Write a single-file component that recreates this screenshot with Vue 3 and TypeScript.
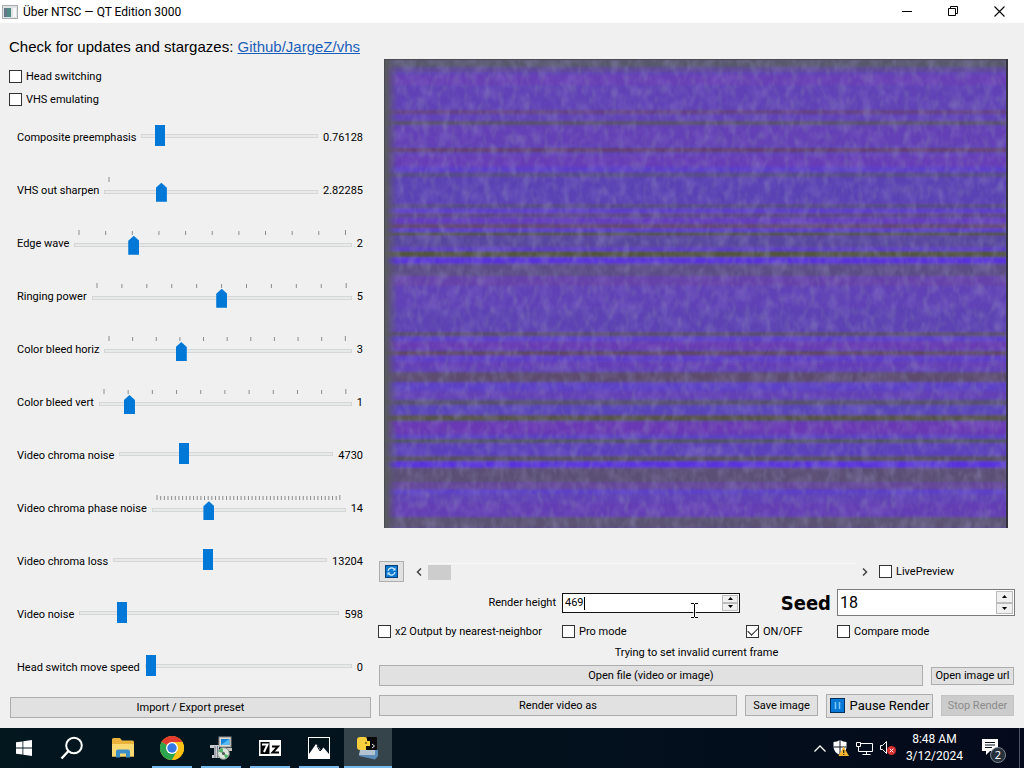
<script setup lang="ts">
import { ref } from 'vue'

interface Slider {
  id: string
  label: string
  value: string
  position: number
  ticks: number[]
}

const evenTicks = (count: number): number[] =>
  Array.from({ length: count + 1 }, (_, i) => (i * 100) / count)

const sliders = ref<Slider[]>([
  { id: 'preemphasis', label: 'Composite preemphasis', value: '0.76128', position: 76, ticks: [] },
  { id: 'sharpen', label: 'VHS out sharpen', value: '2.82285', position: 252, ticks: [0] },
  { id: 'edge-wave', label: 'Edge wave', value: '2', position: 200, ticks: evenTicks(10) },
  { id: 'ringing', label: 'Ringing power', value: '5', position: 500, ticks: evenTicks(10) },
  { id: 'bleed-h', label: 'Color bleed horiz', value: '3', position: 300, ticks: evenTicks(10) },
  { id: 'bleed-v', label: 'Color bleed vert', value: '1', position: 100, ticks: evenTicks(10) },
  { id: 'chroma-noise', label: 'Video chroma noise', value: '4730', position: 289, ticks: [] },
  { id: 'phase-noise', label: 'Video chroma phase noise', value: '14', position: 280, ticks: evenTicks(50) },
  { id: 'chroma-loss', label: 'Video chroma loss', value: '13204', position: 438, ticks: [] },
  { id: 'noise', label: 'Video noise', value: '598', position: 146, ticks: [] },
  { id: 'head-speed', label: 'Head switch move speed', value: '0', position: 0, ticks: [] },
])

const renderHeight = ref(469)
const seed = ref(18)
const framePosition = ref(0)

interface Band { y: number; h: number; c: string; o: number }
const bands: Band[] = [
  { y: 0, h: 8, c: '#59586c', o: 1 },
  { y: 8, h: 5, c: '#5c4c90', o: 0.8 },
  { y: 16, h: 10, c: '#6d3eb6', o: 0.6 },
  { y: 51, h: 4, c: '#654280', o: 0.9 },
  { y: 62, h: 4, c: '#5a516c', o: 1 },
  { y: 68, h: 18, c: '#673db4', o: 0.5 },
  { y: 89, h: 4, c: '#623f6c', o: 1 },
  { y: 96, h: 14, c: '#6a3cb8', o: 0.6 },
  { y: 108, h: 4, c: '#573fd2', o: 0.7 },
  { y: 114, h: 4, c: '#554b86', o: 1 },
  { y: 119, h: 24, c: '#5643b2', o: 0.6 },
  { y: 145, h: 4, c: '#554c80', o: 0.9 },
  { y: 150, h: 3, c: '#5b3bd2', o: 0.8 },
  { y: 155, h: 3, c: '#5b4978', o: 1 },
  { y: 160, h: 3, c: '#6638c2', o: 0.8 },
  { y: 165, h: 4, c: '#63456f', o: 1 },
  { y: 170, h: 3, c: '#5a3cd0', o: 0.9 },
  { y: 173, h: 4, c: '#54524f', o: 1 },
  { y: 178, h: 10, c: '#56489a', o: 0.8 },
  { y: 189, h: 3, c: '#5b39d0', o: 0.8 },
  { y: 192, h: 6, c: '#53543e', o: 1 },
  { y: 199, h: 5, c: '#5933dc', o: 1 },
  { y: 205, h: 12, c: '#5d5082', o: 0.9 },
  { y: 217, h: 10, c: '#6742a8', o: 0.8 },
  { y: 250, h: 22, c: '#5844b0', o: 0.6 },
  { y: 273, h: 4, c: '#5a506c', o: 1 },
  { y: 278, h: 4, c: '#5d3fd0', o: 0.8 },
  { y: 283, h: 7, c: '#6b38b2', o: 0.7 },
  { y: 292, h: 4, c: '#5e475f', o: 1 },
  { y: 298, h: 4, c: '#5c3dcf', o: 0.8 },
  { y: 303, h: 6, c: '#663bb8', o: 0.7 },
  { y: 313, h: 10, c: '#5b4c6e', o: 1 },
  { y: 324, h: 8, c: '#5a42cc', o: 0.7 },
  { y: 333, h: 5, c: '#6640b7', o: 0.7 },
  { y: 341, h: 5, c: '#575170', o: 1 },
  { y: 347, h: 8, c: '#5846ba', o: 0.8 },
  { y: 356, h: 6, c: '#545348', o: 1 },
  { y: 363, h: 12, c: '#6a38b4', o: 0.9 },
  { y: 376, h: 3, c: '#5b40cc', o: 0.7 },
  { y: 380, h: 4, c: '#505365', o: 1 },
  { y: 386, h: 10, c: '#5842bd', o: 0.7 },
  { y: 397, h: 5, c: '#575064', o: 1 },
  { y: 403, h: 5, c: '#5930e0', o: 1 },
  { y: 409, h: 14, c: '#5b5074', o: 1 },
  { y: 423, h: 7, c: '#674994', o: 0.8 },
  { y: 431, h: 4, c: '#5a40cd', o: 0.8 },
  { y: 444, h: 14, c: '#673bb4', o: 0.7 },
  { y: 458, h: 11, c: '#5a536e', o: 0.95 },
]
</script>

<template>
  <div class="desktop">
    <header class="titlebar">
      <svg class="app-icon" width="16" height="14" viewBox="0 0 16 14" aria-hidden="true">
        <rect x=".5" y=".5" width="15" height="13" fill="#dfe3e3" stroke="#a9adad" />
        <rect x="2" y="3" width="7" height="9" fill="#4f8a86" />
        <rect x="2" y="3" width="3" height="9" fill="#64788a" />
        <rect x="11" y="3" width="3" height="9" fill="#f7f7f7" />
      </svg>
      <h1>Über NTSC — QT Edition 3000</h1>
      <div class="window-buttons">
        <button type="button" aria-label="Minimize">
          <svg width="11" height="11" viewBox="0 0 11 11"><path d="M0 5.500h10" stroke="#000" /></svg>
        </button>
        <button type="button" aria-label="Restore">
          <svg width="11" height="11" viewBox="0 0 11 11" fill="none" stroke="#000">
            <path d="M.5 2.500h7v7h-7zM2.500 2.500v-2h7v7h-2" />
          </svg>
        </button>
        <button type="button" aria-label="Close">
          <svg width="11" height="11" viewBox="0 0 11 11"><path d="M.5 .5l10 10M10.500 .5l-10 10" stroke="#000" stroke-width="1.100" /></svg>
        </button>
      </div>
    </header>

    <main>
      <section class="settings">
        <p class="updates">Check for updates and stargazes: <a href="#">Github/JargeZ/vhs</a></p>
        <label class="check"><input type="checkbox" />Head switching</label>
        <label class="check"><input type="checkbox" />VHS emulating</label>

        <div class="sliders">
          <div v-for="s in sliders" :key="s.id" class="slider-row">
            <label :for="s.id">{{ s.label }}</label>
            <div class="slider" :class="{ ticked: s.ticks.length }">
              <svg v-if="s.ticks.length" class="ticks" height="6" aria-hidden="true">
                <line
                  v-for="(t, i) in s.ticks"
                  :key="i"
                  :x1="t + '%'"
                  :x2="t + '%'"
                  :y1="i === 0 || i === s.ticks.length - 1 ? 0 : 1"
                  y2="5"
                />
              </svg>
              <input :id="s.id" v-model="s.position" type="range" min="0" max="1000" />
            </div>
            <output :for="s.id">{{ s.value }}</output>
          </div>
        </div>

        <button type="button" class="push">Import / Export preset</button>
      </section>

      <section class="workspace">
        <svg class="preview" viewBox="0 0 624 469" preserveAspectRatio="none" role="img" aria-label="Video preview">
          <defs>
            <filter id="grain" x="0" y="0" width="100%" height="100%">
              <feTurbulence type="fractalNoise" baseFrequency="0.15 0.08" numOctaves="2" seed="18" />
              <feColorMatrix values="0 0 0 0 0.22  0 0 0 0 0.22  0 0 0 0 0.40  3 0 0 0 -1.35" />
            </filter>
            <filter id="tint" x="0" y="0" width="100%" height="100%">
              <feTurbulence type="fractalNoise" baseFrequency="0.09 0.07" numOctaves="2" seed="7" />
              <feColorMatrix values="0 0 0 0 0.38  0 0 0 0 0.34  0 0 0 0 0.66  0 2.6 0 0 -1.1" />
            </filter>
            <filter id="soft" x="0" y="0" width="100%" height="100%">
              <feGaussianBlur stdDeviation="0 0.8" />
            </filter>
            <linearGradient id="edge">
              <stop offset="0" stop-color="#555a55" />
              <stop offset=".3" stop-color="#59595f" stop-opacity=".8" />
              <stop offset="1" stop-color="#574c80" stop-opacity="0" />
            </linearGradient>
          </defs>
          <rect width="624" height="469" fill="#6042b6" />
          <g filter="url(#soft)">
            <rect width="624" height="469" fill="#6042b6" />
            <rect v-for="b in bands" :key="b.y" x="0" :y="b.y" width="624" :height="b.h" :fill="b.c" :opacity="b.o" />
          </g>
          <rect width="624" height="469" filter="url(#grain)" opacity=".28" />
          <rect width="624" height="469" filter="url(#tint)" opacity=".2" />
          <rect width="14" height="469" fill="url(#edge)" />
          <path d="M.5 0v469M0 .5h624" stroke="#4a4a52" />
          <path d="M623 0v469" stroke="#34323e" stroke-width="2" />
        </svg>

        <div class="seek-row">
          <button type="button" class="push refresh" aria-label="Refresh frame">
            <svg width="13" height="13" viewBox="0 0 13 13">
              <rect x=".5" y=".5" width="12" height="12" fill="#0878d0" stroke="#073f78" />
              <path d="M3 6a3.500 3.500 0 0 1 6-2M10 7a3.500 3.500 0 0 1-6 2" fill="none" stroke="#d7efff" stroke-width="1.200" />
              <path d="M10.500 2.500v3h-3zM2.500 10.500v-3h3z" fill="#d7efff" />
            </svg>
          </button>
          <div class="scrollbar">
            <svg width="6" height="8" viewBox="0 0 6 8" aria-hidden="true"><path d="M5 .5L1.500 4 5 7.500" /></svg>
            <input v-model="framePosition" type="range" min="0" max="100" aria-label="Frame" />
            <svg width="6" height="8" viewBox="0 0 6 8" aria-hidden="true"><path d="M1 .5L4.500 4 1 7.500" /></svg>
          </div>
          <label class="check"><input type="checkbox" />LivePreview</label>
        </div>

        <div class="options">
          <label class="field-label" for="render-height">Render height</label>
          <div class="spin focused">
            <input id="render-height" v-model="renderHeight" type="number" />
            <span class="caret"></span>
            <div class="steps">
              <button type="button" aria-label="Increase render height"><svg width="5" height="3" viewBox="0 0 5 3"><path d="M0 3L2.500 0 5 3z" /></svg></button>
              <button type="button" aria-label="Decrease render height"><svg width="5" height="3" viewBox="0 0 5 3"><path d="M0 0L2.500 3 5 0z" /></svg></button>
            </div>
            <svg class="pointer" width="9" height="17" viewBox="0 0 9 17" aria-hidden="true">
              <path d="M1 1.500h3M5 1.500h3M4.500 2v13M1 15.500h3M5 15.500h3" fill="none" stroke="#fff" stroke-width="3" opacity=".7" />
              <path d="M1 1.500h3M5 1.500h3M4.500 2v13M1 15.500h3M5 15.500h3" fill="none" stroke="#000" />
            </svg>
          </div>
          <label class="field-label seed-label" for="seed">Seed</label>
          <div class="spin large">
            <input id="seed" v-model="seed" type="number" />
            <div class="steps">
              <button type="button" aria-label="Increase seed"><svg width="5" height="3" viewBox="0 0 5 3"><path d="M0 3L2.500 0 5 3z" /></svg></button>
              <button type="button" aria-label="Decrease seed"><svg width="5" height="3" viewBox="0 0 5 3"><path d="M0 0L2.500 3 5 0z" /></svg></button>
            </div>
          </div>
          <label class="check"><input type="checkbox" />x2 Output by nearest-neighbor</label>
          <label class="check"><input type="checkbox" />Pro mode</label>
          <label class="check"><input type="checkbox" checked />ON/OFF</label>
          <label class="check"><input type="checkbox" />Compare mode</label>
        </div>

        <p class="status">Trying to set invalid current frame</p>

        <div class="actions">
          <button type="button" class="push grow">Open file (video or image)</button>
          <button type="button" class="push small">Open image url</button>
        </div>
        <div class="actions last">
          <button type="button" class="push grow">Render video as</button>
          <button type="button" class="push save">Save image</button>
          <button type="button" class="push pause">
            <svg width="15" height="15" viewBox="0 0 15 15" aria-hidden="true">
              <rect x=".5" y=".5" width="14" height="14" fill="#0878d7" stroke="#052f58" />
              <path d="M5.500 4v7M9.500 4v7" stroke="#7cc7f5" stroke-width="1.500" />
            </svg>
            Pause Render
          </button>
          <button type="button" class="push stop" disabled>Stop Render</button>
        </div>
      </section>
    </main>

    <footer class="taskbar">
      <nav class="apps" aria-label="Taskbar">
        <button type="button" aria-label="Start">
          <svg width="16" height="16" viewBox="0 0 16 16" fill="#fff"><path d="M0 2.300L6.500 1.400v6.200H0zM7.300 1.300L16 0v7.600H7.300zM0 8.400h6.500v6.200L0 13.700zM7.300 8.400H16V16l-8.700-1.300z" /></svg>
        </button>
        <button type="button" aria-label="Search">
          <svg width="24" height="24" viewBox="0 0 24 24" fill="none" stroke="#fff" stroke-width="2"><circle cx="14" cy="9.500" r="7.800" /><path d="M8.500 15L1.500 22.500" stroke-width="2.400" /></svg>
        </button>
        <button type="button" class="spaced" aria-label="File Explorer">
          <svg width="22" height="20" viewBox="0 0 22 20">
            <path d="M0 1.500Q0 0 1.500 0H8l2 2.500h10.500Q22 2.500 22 4v14.500H0z" fill="#e9b33c" />
            <path d="M0 6h22v12.500H0z" fill="#fad872" />
            <path d="M4 19.500v-6Q4 11.500 6 11.500h10q2 0 2 2v6h-4V15.500H8v4z" fill="#3a8fc8" />
          </svg>
        </button>
        <button type="button" class="open" aria-label="Chrome">
          <svg width="24" height="24" viewBox="0 0 24 24">
            <circle cx="12" cy="12" r="12" fill="#fbc116" />
            <path d="M12 12L1.600 6A12 12 0 0 1 22.400 6z" fill="#e33b2e" />
            <path d="M12 12L1.600 6A12 12 0 0 0 12 24L17 15z" fill="#2da44e" />
            <path d="M12 6h10.400A12 12 0 0 1 12 24l5.200-9z" fill="#fbc116" />
            <circle cx="12" cy="12" r="6" fill="#fff" /><circle cx="12" cy="12" r="4.700" fill="#3478e5" />
          </svg>
        </button>
        <button type="button" class="open" aria-label="Installer">
          <svg width="24" height="24" viewBox="0 0 24 24">
            <rect x="10" y="1" width="12" height="10" fill="#dcdad0" stroke="#8d8d8d" />
            <rect x="12" y="3" width="8.500" height="6" fill="#1687d8" /><path d="M12 9l8-6v6z" fill="#57baf3" />
            <path d="M12 12h11v3H12z" fill="#c8c6bc" />
            <path d="M1 9h9v13H3v-3h2V12H1z" fill="#c9ccd0" /><path d="M6 10v12M8.500 10v12" stroke="#777f88" />
            <circle cx="14.500" cy="17.500" r="5.800" fill="#dce6dc" stroke="#8b958d" />
            <path d="M14.500 17.500l-5-2a5.500 5.500 0 0 1 4-3.500zM14.500 17.500l5 2a5.500 5.500 0 0 1-3 3z" fill="#52b36a" />
            <circle cx="14.500" cy="17.500" r="1.500" fill="#555" />
          </svg>
        </button>
        <button type="button" class="open" aria-label="7-Zip">
          <svg width="22" height="16" viewBox="0 0 22 16">
            <rect width="22" height="16" fill="#fff" /><path d="M1.500 2h9v12h-9z" fill="#000" />
            <path d="M3 4.500h5.500L5 12" fill="none" stroke="#fff" stroke-width="2" />
            <path d="M13 6.500h6l-5.500 6H20" fill="none" stroke="#000" stroke-width="2" />
          </svg>
        </button>
        <button type="button" class="open" aria-label="Photos">
          <svg width="22" height="22" viewBox="0 0 22 22">
            <rect x=".5" y=".5" width="21" height="21" fill="#03131c" stroke="#fff" />
            <path d="M1 17l7-10 5 6.500 2.500-3L21 17v4H1z" fill="#fff" /><path d="M9 9l3 5 2-2" fill="none" stroke="#03131c" />
          </svg>
        </button>
        <button type="button" class="open active" aria-label="Python">
          <svg width="24" height="24" viewBox="0 0 24 24">
            <path d="M5 14h17v6l-3 3.500L3 20z" fill="#5c8db8" /><path d="M4 14h15v5H3z" fill="#b4c3d0" />
            <rect x="9" y="1" width="12" height="13" rx="1" fill="#0a0a0a" /><path d="M16 8l2.500 2-2.500 2" fill="none" stroke="#eee" />
            <path d="M1 4q0-3 3-3h5q2 0 2 2v2h3v5h-4v4H4q-3 0-3-3z" fill="#f6ce3d" /><circle cx="10" cy="7" r="1" fill="#6b5310" />
          </svg>
        </button>
      </nav>
      <div class="tray">
        <svg width="12" height="7" viewBox="0 0 12 7" fill="none" stroke="#fff" stroke-width="1.300"><path d="M.5 6.500L6 1l5.500 5.500" /></svg>
        <svg width="16" height="16" viewBox="0 0 16 16">
          <path d="M7 0q3 2 6.500 2v5q0 5-6.500 8Q.5 12 .5 7V2Q4 2 7 0z" fill="#fff" /><path d="M7 0v15M.5 7h13" stroke="#07131f" />
          <path d="M10.500 6.500L16 16H5.500z" fill="#f5b52c" /><path d="M10.700 10v3M10.700 14v1" stroke="#222" stroke-width="1.200" />
        </svg>
        <svg width="17" height="14" viewBox="0 0 17 14" fill="none" stroke="#fff">
          <path d="M5 2.500h11.500v8H5M.5 1.500h4v4h-4zM2.500 5.500v5h2.500M10.500 10.500v3M6.500 13.500h8" />
        </svg>
        <svg width="16" height="14" viewBox="0 0 16 14" fill="none">
          <path d="M.5 4.500h2l4-4v12l-4-4h-2z" stroke="#fff" /><circle cx="11.500" cy="9.500" r="4.500" fill="#d62f2f" /><path d="M9.700 7.700l3.600 3.600M13.300 7.700l-3.600 3.600" stroke="#fff" />
        </svg>
        <time class="clock" datetime="2024-03-12T08:48"><span>8:48 AM</span><span>3/12/2024</span></time>
        <button type="button" class="notifications" aria-label="2 notifications">
          <svg width="17" height="16" viewBox="0 0 17 16"><path d="M0 0h16v12H8l-4 4v-4H0z" fill="#fff" /><path d="M3 3.500h10M3 6h10M3 8.500h7" stroke="#07101d" /></svg>
          <span class="badge">2</span>
        </button>
        <span class="show-desktop"></span>
      </div>
    </footer>
  </div>
</template>

<style>
html, body { margin: 0; background: #f0f0f0; }
</style>

<style scoped>
* { box-sizing: border-box; }
.desktop {
  min-height: 100vh;
  display: flex;
  flex-direction: column;
  background: #f0f0f0;
  color: #000;
  font: 11px/14px Roboto, "DejaVu Sans Condensed", sans-serif;
}
button, input { font: inherit; color: inherit; margin: 0; padding: 0; }
svg { display: block; flex: none; }
.titlebar { display: flex; align-items: center; height: 23px; padding-left: 2px; background: #fff; }
.titlebar h1 { flex: 1; margin: 0 0 0 5px; font: 400 12px/22px Roboto, sans-serif; }
.window-buttons { display: flex; }
.window-buttons button { width: 46px; height: 21px; display: grid; place-items: center; border: 0; background: none; }
.window-buttons button:last-child { margin-right: 2px; }

main { flex: 1; display: grid; grid-template-columns: minmax(0, 361fr) minmax(0, 635fr); gap: 8px; padding: 0 10px; }
.settings { display: flex; flex-direction: column; padding: 14px 0 10px; }
.updates { margin: 0 0 0 -1px; height: 20px; font: 15px/20px "Liberation Sans", sans-serif; white-space: nowrap; }
.updates a { color: #1c5fb8; text-decoration: underline; }
.check { display: flex; align-items: center; gap: 4px; height: 23px; white-space: nowrap; }
.settings .check { margin-left: -1px; }
.updates + .check { margin-top: 8px; }
.check input {
  appearance: none; flex: none; width: 13px; height: 13px; display: grid; place-items: center;
  border: 1px solid #333; background: #fff;
}
.check input:checked::after {
  content: ""; width: 9px; height: 5px; margin-bottom: 3px;
  border: solid #222; border-width: 0 0 1px 1px; transform: rotate(-45deg);
}
.sliders { flex: 1; display: flex; flex-direction: column; padding: 0 8px 2px 7px; }
.slider-row { flex: 1; display: flex; align-items: center; gap: 5px; white-space: nowrap; }
.slider { flex: 1; min-width: 0; display: flex; flex-direction: column; padding-bottom: 4px; }
.ticks { width: calc(100% - 11px); margin: 0 6px 0 5px; overflow: visible; stroke: #8c8c8c; }
.slider input { appearance: none; width: 100%; height: 21px; background: none; }
.slider.ticked input { height: 18px; }
.slider input::-webkit-slider-runnable-track { height: 4px; border: 1px solid #d6d6d6; background: #e7eaea; }
.slider input::-webkit-slider-thumb { appearance: none; width: 10px; height: 21px; margin-top: -10px; background: #0078d7; }
.slider.ticked input::-webkit-slider-thumb {
  width: 11px; height: 19px; margin-top: -8px; clip-path: polygon(50% 0, 100% 5px, 100% 100%, 0 100%, 0 5px);
}
.push {
  height: 21px; display: flex; align-items: center; justify-content: center;
  border: 1px solid #adadad; background: #e1e1e1; white-space: nowrap;
}

.workspace { display: flex; flex-direction: column; padding: 36px 0 11px; min-width: 0; }
.preview { flex: 1 1 0; min-height: 0; width: calc(100% - 11px); margin: 0 6px 0 5px; }
.seek-row { display: flex; align-items: center; margin-top: 32px; height: 23px; }
.refresh { width: 25px; }
.scrollbar { flex: 1; display: flex; align-items: center; gap: 6px; margin: 0 11px 0 12px; }
.scrollbar path { fill: none; stroke: #444; stroke-width: 1.5; }
.scrollbar input { appearance: none; flex: 1; min-width: 0; height: 17px; border-top: 1px solid #f8f8f8; background: none; }
.scrollbar input::-webkit-slider-thumb { appearance: none; width: 23px; height: 15px; background: #cdcdcd; }
.seek-row .check { width: 135px; }
.options { display: grid; grid-template-columns: minmax(0, 1fr) minmax(0, 1fr) 85px minmax(0, 1fr); grid-template-rows: 27px 23px; gap: 4px 6px; align-items: center; margin: 6px -1px 0; }
.field-label { justify-self: end; }
.seed-label { font: 700 20px/26px "DejaVu Sans Condensed", sans-serif; color: #000; }
.spin { position: relative; display: flex; height: 20px; min-width: 0; border: 1px solid #7a7a7a; background: #fff; }
.spin.focused { border-color: #111; }
.spin.large { height: 27px; font-size: 16px; }
.spin input { appearance: textfield; flex: 1; min-width: 0; border: 0; padding: 0 2px; background: none; outline: 0; }
.spin input::-webkit-inner-spin-button { appearance: none; margin: 0; }
.steps { display: flex; flex-direction: column; width: 16px; margin: 1px; }
.large .steps { width: 17px; }
.steps button { flex: 1; display: grid; place-items: center; border: 1px solid #bcbcbc; background: #f0f0f0; }
.caret { position: absolute; left: 21px; top: 3px; width: 1px; height: 13px; background: #000; }
.pointer { position: absolute; right: 40px; top: 8px; }
.status { margin: 0; height: 19px; line-height: 19px; text-align: center; }
.actions { display: flex; align-items: center; gap: 8px; margin-top: 3px; }
.actions.last { margin-top: 7px; height: 25px; margin-bottom: -1px; }
.grow { flex: 1; }
.small { width: 83px; height: 18px; }
.save, .stop { width: 73px; }
.pause { width: 107px; height: 24px; gap: 5px; font-size: 13px; }
.stop { border-color: #c4c4c4; background: #ccc; color: #8b8b8b; }

.taskbar { display: flex; justify-content: space-between; height: 40px; background: linear-gradient(90deg, #03171f, #03101d 60%, #040a1b); color: #fff; }
.apps { display: flex; }
.apps button { width: 48px; height: 40px; display: grid; place-items: center; border: 0; background: none; position: relative; }
.apps .spaced { margin-left: 3px; }
.apps .open { margin-left: 1px; }
.apps .open::after { content: ""; position: absolute; left: 4px; right: 4px; bottom: 0; height: 2px; background: #76b9ed; }
.apps .active { background: #35444b; }
.apps .active::after { left: 0; right: 0; }
.tray { display: flex; align-items: center; gap: 7px; }
.clock { display: flex; flex-direction: column; align-items: center; margin-left: 3px; font: 12px/17px Roboto, sans-serif; white-space: nowrap; }
.notifications { position: relative; width: 37px; height: 40px; display: grid; place-items: center start; margin-left: 12px; border: 0; background: none; }
.notifications svg { margin-bottom: 2px; }
.badge {
  position: absolute; left: 8px; top: 19px; width: 16px; height: 16px; border: 1px solid #7d8792; border-radius: 50%;
  background: #27313b; font: 11px/14px "Noto Sans", sans-serif; text-align: center; color: #fff;
}
.show-desktop { width: 5px; height: 40px; margin-left: -7px; border-left: 1px solid #4c5662; }
</style>
